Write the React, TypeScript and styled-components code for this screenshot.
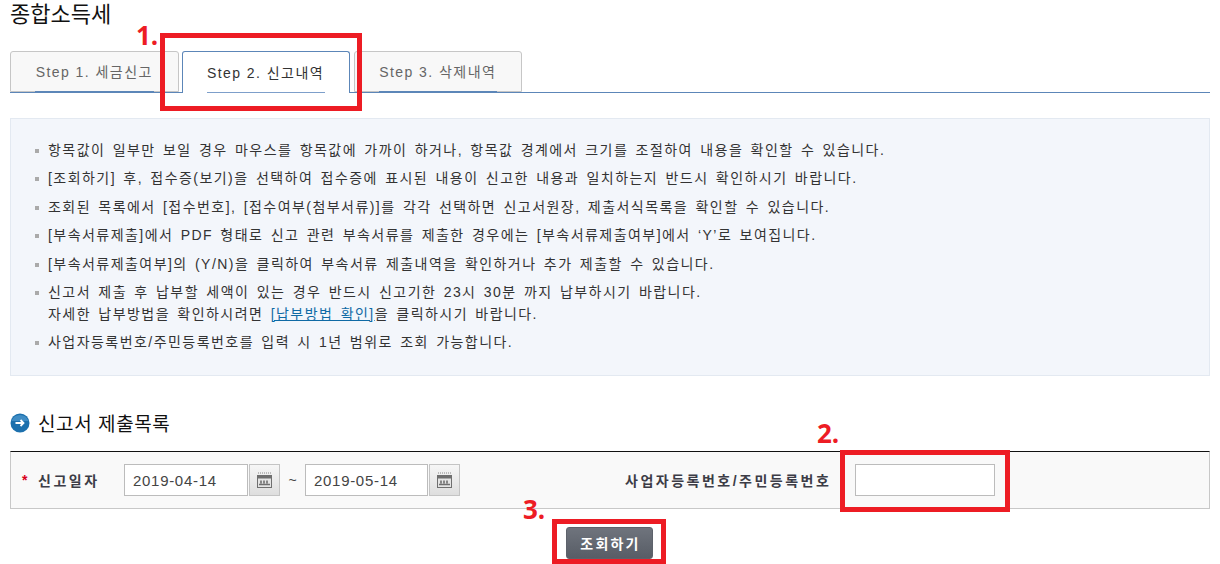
import { FC } from 'react'
import styled, { createGlobalStyle } from 'styled-components'

const GlobalStyle = createGlobalStyle`
  html, body {
    margin: 0;
    padding: 0;
    background: #fff;
    overflow: hidden;
  }
  body {
    font-family: "Liberation Sans", "Noto Sans CJK KR", sans-serif;
    color: #333;
  }
`

const Page = styled.div`
  position: relative;
  width: 1220px;
  height: 564px;
  padding: 0 10px;
  box-sizing: border-box;
  overflow: hidden;
`

const Title = styled.h1`
  margin: 0;
  height: 51px;
  padding-top: 1px;
  box-sizing: border-box;
  font-size: 22px;
  line-height: 28px;
  font-weight: 400;
  color: #111;
`

const TabBar = styled.div`
  display: flex;
  gap: 3px;
  height: 41px;
  border-bottom: 1px solid #5c86b8;
`

const Tab = styled.div<{ $active?: boolean }>`
  position: relative;
  display: flex;
  align-items: center;
  justify-content: center;
  width: ${({ $active }) => ($active ? '168px' : '168.5px')};
  height: ${({ $active }) => ($active ? '42px' : '41px')};
  margin-right: ${({ $active }) => ($active ? '1px' : '0')};
  box-sizing: border-box;
  padding-bottom: 1px;
  border: 1px solid ${({ $active }) => ($active ? '#5c86b8' : '#c6c6c6')};
  border-bottom: ${({ $active }) => ($active ? 'none' : '1px solid #c6c6c6')};
  border-radius: 3px 3px 0 0;
  background: ${({ $active }) => ($active ? '#fff' : '#f8f8f8')};
  font-size: 14px;
  letter-spacing: 1.45px;
  color: ${({ $active }) => ($active ? '#333' : '#666')};

  &::after {
    content: '';
    position: absolute;
    left: 24px;
    right: 24px;
    bottom: ${({ $active }) => ($active ? '0' : '-1px')};
    height: 1px;
    background: ${({ $active }) => ($active ? '#7d9fca' : '#5c86b8')};
  }
`

const InfoBox = styled.ul`
  display: flex;
  flex-direction: column;
  gap: 6.4px;
  margin: 25px 0 0;
  height: 258px;
  padding: 20px 20px 0 23px;
  box-sizing: border-box;
  list-style: none;
  background: #f3f6fb;
  border: 1px solid #e3e9f1;
`

const InfoItem = styled.li`
  position: relative;
  padding-left: 14px;
  font-size: 14px;
  line-height: 22px;
  letter-spacing: 1.45px;
  word-spacing: 2px;
  color: #333;

  &::before {
    content: '';
    position: absolute;
    left: 1px;
    top: 10px;
    width: 4px;
    height: 4px;
    background: #aaa;
  }
`

const InfoLink = styled.a`
  color: #0f6aa5;
  text-decoration: underline;
`

const SectionHeading = styled.h2`
  display: flex;
  align-items: center;
  gap: 8px;
  margin: 35px 0 0;
  height: 23px;
  font-size: 19px;
  font-weight: 400;
  letter-spacing: 0.6px;
  color: #111;
`

const SearchPanel = styled.div`
  display: flex;
  align-items: center;
  height: 58px;
  margin-top: 17px;
  padding-left: 11px;
  box-sizing: border-box;
  background: #f9f9f9;
  border: 1px solid #c8c8c8;
  border-top: 1px solid #111;
`

const Required = styled.span`
  width: 16px;
  color: #d9001b;
  font-size: 14px;
  font-weight: 700;
  line-height: 14px;
`

const FieldLabel = styled.label<{ $wide?: boolean }>`
  width: ${({ $wide }) => ($wide ? '205px' : '86px')};
  margin-left: ${({ $wide }) => ($wide ? '165px' : '0')};
  white-space: nowrap;
  font-size: 14px;
  font-weight: 700;
  letter-spacing: 2.5px;
  color: #3c3c46;
`

const DateInput = styled.input<{ $narrow?: boolean }>`
  width: ${({ $narrow }) => ($narrow ? '123px' : '124px')};
  height: 32px;
  padding: 0 8px;
  box-sizing: border-box;
  border: 1px solid #bcbcbc;
  background: #fff;
  font-family: inherit;
  font-size: 15px;
  letter-spacing: 0.7px;
  color: #444;
`

const CalendarButton = styled.button`
  display: flex;
  align-items: center;
  justify-content: center;
  width: 31px;
  height: 32px;
  margin-left: 1px;
  padding: 0;
  border: 1px solid #c4c4c4;
  background: linear-gradient(#f6f6f6, #dedede);
`

const Tilde = styled.span`
  width: 25px;
  text-align: center;
  font-size: 14px;
  color: #444;
`

const NumberInput = styled.input`
  width: 140px;
  height: 32px;
  margin-left: 25px;
  padding: 0 8px;
  box-sizing: border-box;
  border: 1px solid #bcbcbc;
  background: #fff;
`

const Actions = styled.div`
  display: flex;
  justify-content: center;
  margin-top: 18px;
  padding-right: 1px;
`

const SearchButton = styled.button`
  width: 87px;
  height: 32px;
  padding: 0 0 0 2px;
  border: 1px solid #5d626b;
  border-radius: 3px;
  background: linear-gradient(#6f747d, #585d66);
  font-family: inherit;
  font-size: 14px;
  font-weight: 700;
  letter-spacing: 2.2px;
  color: #fff;
`

// 스크린샷 위에 덧그려진 빨간 표시
const MarkBox = styled.div<{ $left: number; $top: number; $width: number; $height: number }>`
  position: absolute;
  left: ${({ $left }) => $left}px;
  top: ${({ $top }) => $top}px;
  width: ${({ $width }) => $width}px;
  height: ${({ $height }) => $height}px;
  box-sizing: border-box;
  border: 5px solid #ed1c24;
  pointer-events: none;
`

const MarkNumber = styled.span<{ $left: number; $top: number }>`
  position: absolute;
  left: ${({ $left }) => $left}px;
  top: ${({ $top }) => $top}px;
  font-family: "Open Sans", "Liberation Sans", sans-serif;
  font-size: 26px;
  line-height: 28px;
  font-weight: 700;
  color: #ed1c24;
`

const CalendarIcon: FC = () => (
  <svg width="15" height="16" viewBox="0 0 15 16">
    <path d="M1 1h1M3 1h1M5 1h1M7 1h1M9 1h1M11 1h1M13 1h1" stroke="#888" strokeWidth="1" />
    <rect x="0.5" y="3.5" width="14" height="12" fill="#e4e4e4" stroke="#6f6f6f" />
    <rect x="1" y="4" width="13" height="2.5" fill="#6f6f6f" />
    <path d="M4 8.5v3M7 8.5v3M10 8.5v3M2 12.5h11" stroke="#6f6f6f" strokeWidth="1.6" fill="none" />
  </svg>
)

const ArrowBullet: FC = () => (
  <svg width="20" height="20" viewBox="0 0 20 20">
    <circle cx="10" cy="10" r="9.5" fill="#1c70ad" />
    <path d="M1.5 8a9 9 0 0 1 17 0z" fill="#3f8cc4" />
    <path d="M5.5 10h8M10.5 7l3 3-3 3" stroke="#fff" strokeWidth="1.8" fill="none" />
  </svg>
)

const infoItems = [
  '항목값이 일부만 보일 경우 마우스를 항목값에 가까이 하거나, 항목값 경계에서 크기를 조절하여 내용을 확인할 수 있습니다.',
  '[조회하기] 후, 접수증(보기)을 선택하여 접수증에 표시된 내용이 신고한 내용과 일치하는지 반드시 확인하시기 바랍니다.',
  '조회된 목록에서 [접수번호], [접수여부(첨부서류)]를 각각 선택하면 신고서원장, 제출서식목록을 확인할 수 있습니다.',
  '[부속서류제출]에서 PDF 형태로 신고 관련 부속서류를 제출한 경우에는 [부속서류제출여부]에서 ‘Y’로 보여집니다.',
  '[부속서류제출여부]의 (Y/N)을 클릭하여 부속서류 제출내역을 확인하거나 추가 제출할 수 있습니다.',
]

const App: FC = () => {
  return (
    <Page>
      <GlobalStyle />
      <Title>종합소득세</Title>
      <TabBar>
        <Tab>Step 1. 세금신고</Tab>
        <Tab $active>Step 2. 신고내역</Tab>
        <Tab>Step 3. 삭제내역</Tab>
      </TabBar>
      <InfoBox>
        {infoItems.map((item, index) => (
          <InfoItem key={index}>{item}</InfoItem>
        ))}
        <InfoItem>
          신고서 제출 후 납부할 세액이 있는 경우 반드시 신고기한 23시 30분 까지 납부하시기 바랍니다.
          <br />
          자세한 납부방법을 확인하시려면 <InfoLink href="#">[납부방법 확인]</InfoLink>을 클릭하시기 바랍니다.
        </InfoItem>
        <InfoItem>사업자등록번호/주민등록번호를 입력 시 1년 범위로 조회 가능합니다.</InfoItem>
      </InfoBox>
      <SectionHeading>
        <ArrowBullet />
        신고서 제출목록
      </SectionHeading>
      <SearchPanel>
        <Required>*</Required>
        <FieldLabel>신고일자</FieldLabel>
        <DateInput defaultValue="2019-04-14" />
        <CalendarButton>
          <CalendarIcon />
        </CalendarButton>
        <Tilde>~</Tilde>
        <DateInput $narrow defaultValue="2019-05-14" />
        <CalendarButton>
          <CalendarIcon />
        </CalendarButton>
        <FieldLabel $wide>사업자등록번호/주민등록번호</FieldLabel>
        <NumberInput />
      </SearchPanel>
      <Actions>
        <SearchButton>조회하기</SearchButton>
      </Actions>
      <MarkBox $left={160} $top={33} $width={202} $height={78} />
      <MarkBox $left={840} $top={450} $width={170} $height={62} />
      <MarkBox $left={552} $top={519} $width={114} $height={45} />
      <MarkNumber $left={136} $top={21}>1.</MarkNumber>
      <MarkNumber $left={817} $top={419}>2.</MarkNumber>
      <MarkNumber $left={523} $top={495}>3.</MarkNumber>
    </Page>
  )
}

export default App
